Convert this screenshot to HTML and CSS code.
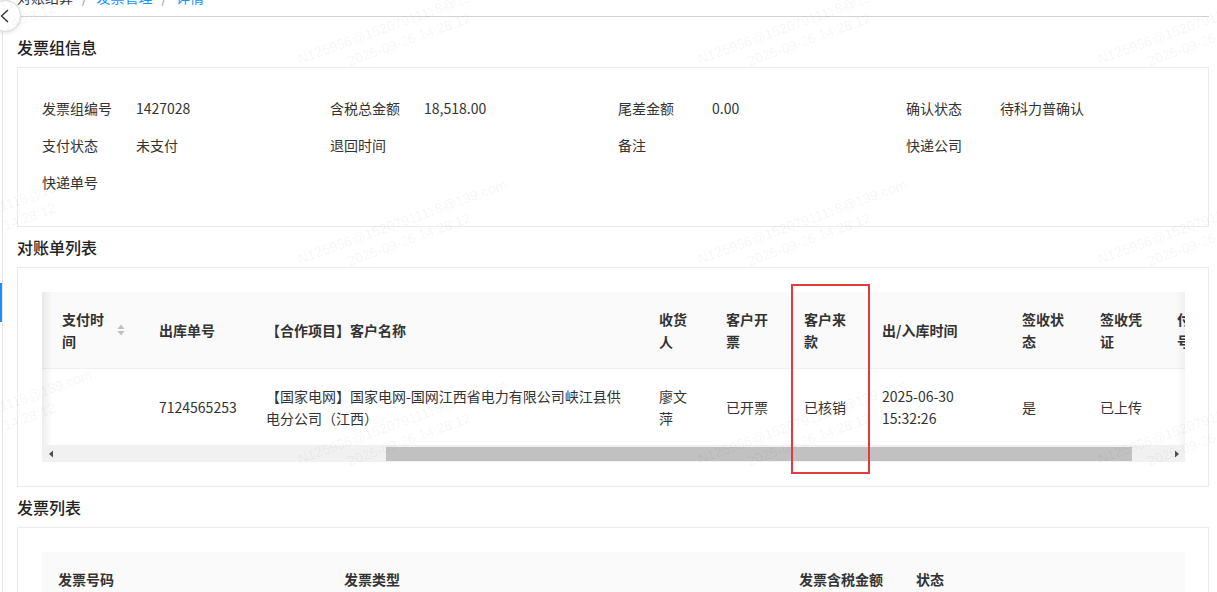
FILE: index.html
```html
<!DOCTYPE html>
<html lang="zh-CN">
<head>
<meta charset="utf-8">
<title>详情</title>
<link rel="stylesheet" href="styles.css">
</head>
<body>
<div class="layout">
  <aside class="side"><div class="side-gap"></div><div class="side-active"></div></aside>
  <main class="main">
    <div class="topbar">
      <nav class="crumbs"><span class="crumb">对账结算</span><span class="sep">/</span><span class="crumb link">发票管理</span><span class="sep">/</span><span class="crumb link">详情</span></nav>
    </div>

    <h2 class="sec-title">发票组信息</h2>
    <section class="card info-card">
      <div class="info-grid">
        <div class="field"><span class="label">发票组编号</span><span class="value">1427028</span></div>
        <div class="field"><span class="label">含税总金额</span><span class="value">18,518.00</span></div>
        <div class="field"><span class="label">尾差金额</span><span class="value">0.00</span></div>
        <div class="field"><span class="label">确认状态</span><span class="value">待科力普确认</span></div>
        <div class="field"><span class="label">支付状态</span><span class="value">未支付</span></div>
        <div class="field"><span class="label">退回时间</span><span class="value"></span></div>
        <div class="field"><span class="label">备注</span><span class="value"></span></div>
        <div class="field"><span class="label">快递公司</span><span class="value"></span></div>
        <div class="field"><span class="label">快递单号</span><span class="value"></span></div>
      </div>
    </section>

    <h2 class="sec-title">对账单列表</h2>
    <section class="card table-card">
      <div class="table-wrap">
        <div class="table-scroll">
          <table class="tbl tbl-recon">
            <colgroup>
              <col class="c-pay"><col class="c-out"><col class="c-cust"><col class="c-recv"><col class="c-inv"><col class="c-fund"><col class="c-time"><col class="c-sign"><col class="c-proof"><col class="c-payno"><col class="c-more">
            </colgroup>
            <thead>
              <tr>
                <th class="first"><div class="th-sort"><span>支付时间</span><svg class="sorter" width="8" height="12" viewBox="0 0 8 12"><path d="M4 0.5 L7.5 5 L0.5 5 Z" fill="#bfbfbf"/><path d="M0.5 7 L7.5 7 L4 11.5 Z" fill="#bfbfbf"/></svg></div></th>
                <th>出库单号</th>
                <th>【合作项目】客户名称</th>
                <th>收货人</th>
                <th>客户开票</th>
                <th>客户来款</th>
                <th>出/入库时间</th>
                <th>签收状态</th>
                <th>签收凭证</th>
                <th>付款单号</th>
                <th>操作</th>
              </tr>
            </thead>
            <tbody>
              <tr>
                <td class="first"></td>
                <td class="nowrap">7124565253</td>
                <td>【国家电网】国家电网-国网江西省电力有限公司峡江县供电分公司（江西）</td>
                <td>廖文萍</td>
                <td>已开票</td>
                <td>已核销</td>
                <td>2025-06-30 15:32:26</td>
                <td>是</td>
                <td>已上传</td>
                <td></td>
                <td></td>
              </tr>
            </tbody>
          </table>
        </div>
        <div class="hscroll">
          <div class="hs-arrow"><svg width="6" height="8" viewBox="0 0 6 8"><path d="M5 0.5 L5 7.5 L1 4 Z" fill="#505050"/></svg></div>
          <div class="hs-track"><div class="hs-thumb"></div></div>
          <div class="hs-arrow"><svg width="6" height="8" viewBox="0 0 6 8"><path d="M1 0.5 L1 7.5 L5 4 Z" fill="#505050"/></svg></div>
        </div>
      </div>
    </section>

    <h2 class="sec-title">发票列表</h2>
    <section class="card table-card">
      <table class="tbl tbl-invoice">
        <colgroup><col class="i-no"><col class="i-type"><col class="i-amt"><col class="i-state"></colgroup>
        <thead>
          <tr><th>发票号码</th><th>发票类型</th><th>发票含税金额</th><th>状态</th></tr>
        </thead>
      </table>
    </section>
  </main>
</div>

<button class="back-btn" type="button" aria-label="返回"><svg width="9" height="14" viewBox="0 0 9 14"><path d="M8 1 L1.5 7 L8 13" fill="none" stroke="#333" stroke-width="1.4"/></svg></button>

<div class="mark-box"></div>

<div class="watermarks">
  <div class="wm wm-a1"><div>N125956@15207911118@139.com</div><div class="wm-l2">2025-09-26 14:28:12</div></div>
  <div class="wm wm-a2"><div>N125956@15207911118@139.com</div><div class="wm-l2">2025-09-26 14:28:12</div></div>
  <div class="wm wm-a3"><div>N125956@15207911118@139.com</div><div class="wm-l2">2025-09-26 14:28:12</div></div>
  <div class="wm wm-a4"><div>N125956@15207911118@139.com</div><div class="wm-l2">2025-09-26 14:28:12</div></div>
  <div class="wm wm-b1"><div>N125956@15207911118@139.com</div><div class="wm-l2">2025-09-26 14:28:12</div></div>
  <div class="wm wm-b2"><div>N125956@15207911118@139.com</div><div class="wm-l2">2025-09-26 14:28:12</div></div>
  <div class="wm wm-b3"><div>N125956@15207911118@139.com</div><div class="wm-l2">2025-09-26 14:28:12</div></div>
  <div class="wm wm-b4"><div>N125956@15207911118@139.com</div><div class="wm-l2">2025-09-26 14:28:12</div></div>
  <div class="wm wm-c1"><div>N125956@15207911118@139.com</div><div class="wm-l2">2025-09-26 14:28:12</div></div>
  <div class="wm wm-c2"><div>N125956@15207911118@139.com</div><div class="wm-l2">2025-09-26 14:28:12</div></div>
  <div class="wm wm-c3"><div>N125956@15207911118@139.com</div><div class="wm-l2">2025-09-26 14:28:12</div></div>
  <div class="wm wm-c4"><div>N125956@15207911118@139.com</div><div class="wm-l2">2025-09-26 14:28:12</div></div>
</div>
</body>
</html>
```
FILE: styles.css
```css
* { box-sizing: border-box; }

html, body {
  margin: 0;
  height: 100%;
  overflow: hidden;
}

body {
  position: relative;
  background: #fff;
  font-family: "Noto Sans CJK SC", "Microsoft YaHei", sans-serif;
  font-size: 14px;
  line-height: 22px;
  color: #333;
}

.layout {
  display: flex;
  height: 100%;
}

/* collapsed side rail */
.side {
  flex: none;
  width: 3px;
  border-right: 1px solid #e4e4e4;
}
.side-gap { height: 283px; }
.side-active { height: 39px; background: #1890ff; }

.main {
  flex: 1;
  min-width: 0;
  padding: 0 8px 0 14px;
}

/* breadcrumb bar (page is scrolled slightly) */
.topbar {
  margin: -14px 0 10px;
  padding-bottom: 8px;
  border-bottom: 1px solid #d2d2d2;
}
.crumbs { display: flex; align-items: center; height: 22px; }
.crumb { color: #333; }
.crumb.link { color: #1890ff; }
.sep { color: #999; margin: 0 9px; }

.sec-title {
  margin: 0;
  font-size: 16px;
  line-height: 40px;
  font-weight: 500;
  color: #222;
}

.card {
  border: 1px solid #ebebeb;
  background: #fff;
}

/* info grid */
.info-card { padding: 21px 14px 26px 24px; }
.info-grid {
  display: grid;
  grid-template-columns: repeat(4, 288px);
  grid-auto-rows: 37px;
  align-items: center;
}
.field { display: flex; }
.label { width: 94px; flex: none; color: #333; }
.value { color: #333; }

/* tables */
.table-card { padding: 24px 23px 24px 24px; }

.table-wrap { position: relative; }
.table-scroll { overflow: hidden; }

.tbl {
  border-collapse: collapse;
  table-layout: fixed;
}
.tbl th {
  background: #fafafa;
  font-weight: 700;
  color: #333;
  text-align: left;
  padding: 16px;
  border-bottom: 1px solid #efefef;
  vertical-align: middle;
}
.tbl td {
  padding: 16px;
  color: #333;
  vertical-align: middle;
}
.tbl .first { padding-left: 20px; padding-right: 18px; }
.tbl .nowrap { white-space: nowrap; }

.tbl-recon { width: 1340px; }
.c-pay { width: 101px; }
.c-out { width: 107px; }
.c-cust { width: 393px; }
.c-recv { width: 67px; }
.c-inv { width: 78px; }
.c-fund { width: 78px; }
.c-time { width: 140px; }
.c-sign { width: 78px; }
.c-proof { width: 77px; }
.c-payno { width: 78px; }
.c-more { width: 243px; }

.th-sort { display: flex; align-items: center; }
.th-sort span { flex: 1; min-width: 0; }
.sorter { flex: none; margin-left: 4px; }

.table-wrap::before,
.table-wrap::after {
  content: "";
  position: absolute;
  top: 0;
  bottom: 17px;
  width: 10px;
  pointer-events: none;
}
.table-wrap::before {
  left: 0;
  background: linear-gradient(to right, rgba(0,0,0,0.07), rgba(0,0,0,0));
}
.table-wrap::after {
  right: 0;
  background: linear-gradient(to left, rgba(0,0,0,0.04), rgba(0,0,0,0));
}

/* horizontal scrollbar */
.hscroll {
  display: flex;
  height: 17px;
  background: #f1f1f1;
}
.hs-arrow {
  width: 17px;
  flex: none;
  display: flex;
  align-items: center;
  justify-content: center;
}
.hs-track {
  flex: 1;
  display: flex;
  align-items: center;
}
.hs-thumb {
  margin-left: 327px;
  width: 746px;
  height: 14px;
  background: #c1c1c1;
}

.tbl-invoice { width: 100%; }
.i-no { width: 286px; }
.i-type { width: 455px; }
.i-amt { width: 117px; }
.i-state { width: auto; }

/* floating back button */
.back-btn {
  position: absolute;
  left: -11px;
  top: 0;
  width: 32px;
  height: 32px;
  padding: 0 11px 0 0;
  border: 1px solid #dcdcdc;
  border-radius: 50%;
  background: #fff;
  box-shadow: 0 1px 4px rgba(0,0,0,0.12);
  display: flex;
  align-items: center;
  justify-content: flex-end;
  z-index: 5;
}

/* red annotation rectangle */
.mark-box {
  position: absolute;
  left: 791px;
  top: 284px;
  width: 79px;
  height: 190px;
  border: 2px solid #e53a3d;
  z-index: 6;
}

/* watermark layer */
.watermarks {
  position: absolute;
  inset: 0;
  overflow: hidden;
  pointer-events: none;
  z-index: 10;
}
.wm {
  position: absolute;
  transform: rotate(-20deg);
  transform-origin: 0 0;
  font-family: "Liberation Sans", Arial, sans-serif;
  font-size: 14px;
  line-height: 19px;
  white-space: nowrap;
  color: rgba(0,0,0,0.055);
}
.wm-l2 { padding-left: 46px; }

.wm-a1 { left: -120px; top: 41px; }
.wm-a2 { left: 295px; top: 51px; }
.wm-a3 { left: 695px; top: 51px; }
.wm-a4 { left: 1095px; top: 51px; }
.wm-b1 { left: -120px; top: 241px; }
.wm-b2 { left: 295px; top: 251px; }
.wm-b3 { left: 695px; top: 251px; }
.wm-b4 { left: 1095px; top: 251px; }
.wm-c1 { left: -120px; top: 441px; }
.wm-c2 { left: 295px; top: 451px; }
.wm-c3 { left: 695px; top: 451px; }
.wm-c4 { left: 1095px; top: 451px; }
```
